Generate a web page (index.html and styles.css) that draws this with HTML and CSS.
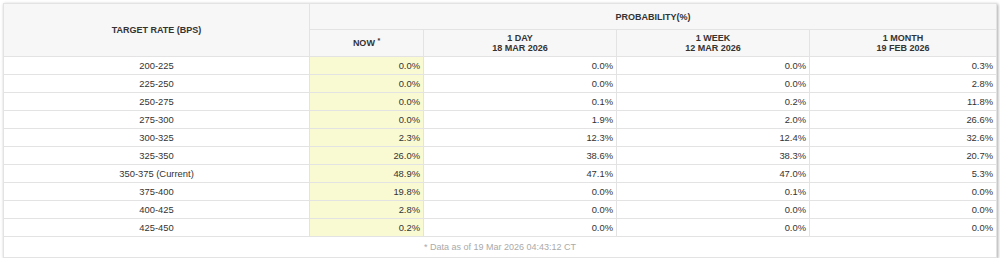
FILE: index.html
```html
<!DOCTYPE html>
<html>
<head>
<meta charset="utf-8">
<link rel="stylesheet" href="styles.css">
</head>
<body>
<div class="wrap">
<table class="prob">
<colgroup>
<col class="c1"><col class="c2"><col class="c3"><col class="c4"><col class="c5">
</colgroup>
<thead>
<tr class="h1"><th rowspan="2">TARGET RATE (BPS)</th><th colspan="4">PROBABILITY(%)</th></tr>
<tr class="h2"><th>NOW <sup>*</sup></th><th>1 DAY<br>18 MAR 2026</th><th>1 WEEK<br>12 MAR 2026</th><th>1 MONTH<br>19 FEB 2026</th></tr>
</thead>
<tbody>
<tr><td class="rate">200-225</td><td class="now">0.0%</td><td>0.0%</td><td>0.0%</td><td>0.3%</td></tr>
<tr><td class="rate">225-250</td><td class="now">0.0%</td><td>0.0%</td><td>0.0%</td><td>2.8%</td></tr>
<tr><td class="rate">250-275</td><td class="now">0.0%</td><td>0.1%</td><td>0.2%</td><td>11.8%</td></tr>
<tr><td class="rate">275-300</td><td class="now">0.0%</td><td>1.9%</td><td>2.0%</td><td>26.6%</td></tr>
<tr><td class="rate">300-325</td><td class="now">2.3%</td><td>12.3%</td><td>12.4%</td><td>32.6%</td></tr>
<tr><td class="rate">325-350</td><td class="now">26.0%</td><td>38.6%</td><td>38.3%</td><td>20.7%</td></tr>
<tr><td class="rate">350-375 (Current)</td><td class="now">48.9%</td><td>47.1%</td><td>47.0%</td><td>5.3%</td></tr>
<tr><td class="rate">375-400</td><td class="now">19.8%</td><td>0.0%</td><td>0.1%</td><td>0.0%</td></tr>
<tr><td class="rate">400-425</td><td class="now">2.8%</td><td>0.0%</td><td>0.0%</td><td>0.0%</td></tr>
<tr><td class="rate">425-450</td><td class="now">0.2%</td><td>0.0%</td><td>0.0%</td><td>0.0%</td></tr>
</tbody>
<tfoot>
<tr><td colspan="5" class="note">* Data as of 19 Mar 2026 04:43:12 CT</td></tr>
</tfoot>
</table>
</div>
</body>
</html>
```

FILE: styles.css
```css
html, body {
  margin: 0;
  padding: 0;
  background: #ffffff;
}
.wrap {
  padding: 3px 0 0 3px;
}
.prob {
  width: 993px;
  border-collapse: collapse;
  table-layout: fixed;
  font-family: "Liberation Sans", Arial, sans-serif;
  font-size: 9.4px;
  color: #333333;
  box-shadow: 1px 1px 3px rgba(0, 0, 0, 0.35);
  background: #ffffff;
}
.c1 { width: 306px; }
.c2 { width: 114px; }
.c3 { width: 193px; }
.c4 { width: 193px; }
.c5 { width: 187px; }
.prob th, .prob td {
  border: 1px solid #e3e3e3;
  padding: 0 3px;
}
.prob th {
  background: #f7f7f7;
  font-weight: bold;
  font-size: 9px;
  line-height: 10px;
  color: #333333;
  text-align: center;
}
.h1 th { height: 25px; }
.h2 th { height: 26px; }
.prob sup {
  font-size: 7px;
  vertical-align: 3px;
  line-height: 0;
}
.prob td {
  height: 17px;
  line-height: 12px;
  text-align: right;
}
.prob td.rate { text-align: center; }
.prob td.now { background: #fafad2; }
.prob td.note {
  text-align: center;
  color: #aaaaaa;
  font-size: 9px;
  height: 20px;
}
```
